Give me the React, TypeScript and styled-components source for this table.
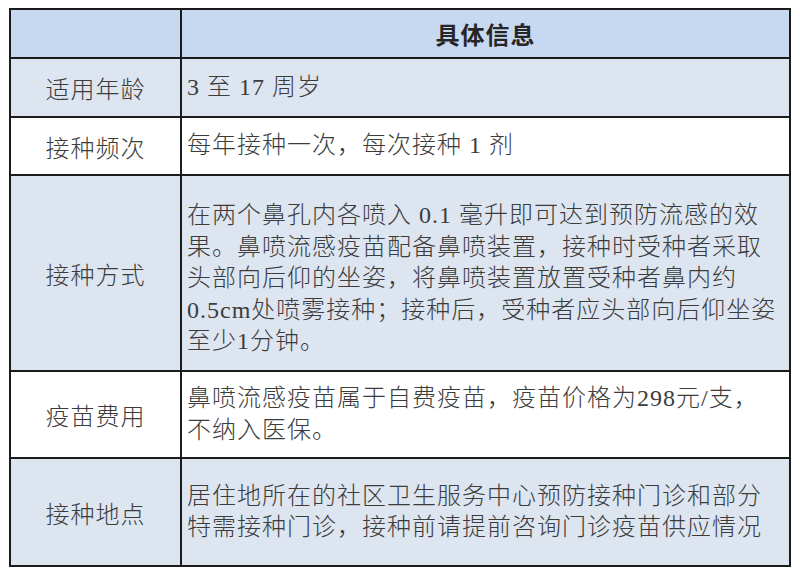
import React from 'react';
import styled, { createGlobalStyle } from 'styled-components';

const GlobalStyle = createGlobalStyle`
  html, body {
    margin: 0;
    padding: 0;
    background: #ffffff;
  }
`;

const Page = styled.div`
  width: 800px;
  height: 573px;
  box-sizing: border-box;
  padding: 8px 9px 0 9px;
  background: #ffffff;
`;

const Table = styled.div`
  display: grid;
  grid-template-columns: 169px 1fr;
  grid-template-rows: 47px 57px 56px 194px 85px 106px;
  gap: 2px;
  padding: 2px;
  background: #1b1b1b;
  width: 782px;
  box-sizing: border-box;
`;

const HeadCell = styled.div`
  background: #c6d9f0;
  display: flex;
  align-items: center;
  justify-content: center;
  font-family: "Noto Sans CJK SC", sans-serif;
  font-weight: 700;
  font-size: 24px;
  color: #262626;
  letter-spacing: 1px;
`;

const LabelCell = styled.div<{ $shaded: boolean }>`
  background: ${({ $shaded }) => ($shaded ? '#dce5f0' : '#ffffff')};
  display: flex;
  align-items: center;
  justify-content: center;
  font-family: "Liberation Serif", "Noto Sans CJK SC", serif;
  font-weight: 300;
  font-size: 24px;
  letter-spacing: 1px;
  color: #3c3c3c;
`;

const ValueCell = styled.div<{ $shaded: boolean; $shift?: number }>`
  background: ${({ $shaded }) => ($shaded ? '#dce5f0' : '#ffffff')};
  display: flex;
  align-items: center;
  padding: ${({ $shift }) => ($shift ? `${$shift}px` : '0')} 6px 0 5px;
  font-family: "Liberation Serif", "Noto Sans CJK SC", serif;
  font-weight: 300;
  font-size: 24px;
  line-height: 31.5px;
  letter-spacing: 1px;
  color: #3c3c3c;
  white-space: nowrap;
`;

const rows = [
  { label: '适用年龄', shaded: true, lines: ['3 至 17 周岁'] },
  { label: '接种频次', shaded: false, lines: ['每年接种一次，每次接种 1 剂'] },
  {
    label: '接种方式',
    shaded: true,
    shift: 12,
    lines: [
      '在两个鼻孔内各喷入 0.1 毫升即可达到预防流感的效',
      '果。鼻喷流感疫苗配备鼻喷装置，接种时受种者采取',
      '头部向后仰的坐姿，将鼻喷装置放置受种者鼻内约',
      '0.5cm处喷雾接种；接种后，受种者应头部向后仰坐姿',
      '至少1分钟。',
    ],
  },
  {
    label: '疫苗费用',
    shaded: false,
    lines: ['鼻喷流感疫苗属于自费疫苗，疫苗价格为298元/支，', '不纳入医保。'],
  },
  {
    label: '接种地点',
    shaded: true,
    lines: ['居住地所在的社区卫生服务中心预防接种门诊和部分', '特需接种门诊，接种前请提前咨询门诊疫苗供应情况'],
  },
];

const App: React.FC = () => {
  return (
    <Page>
      <GlobalStyle />
      <Table>
        <HeadCell />
        <HeadCell>具体信息</HeadCell>
        {rows.map((row) => (
          <React.Fragment key={row.label}>
            <LabelCell $shaded={row.shaded}>{row.label}</LabelCell>
            <ValueCell $shaded={row.shaded} $shift={row.shift}>
              <div>
                {row.lines.map((line, i) => (
                  <div key={i}>{line}</div>
                ))}
              </div>
            </ValueCell>
          </React.Fragment>
        ))}
      </Table>
    </Page>
  );
};

export default App;
